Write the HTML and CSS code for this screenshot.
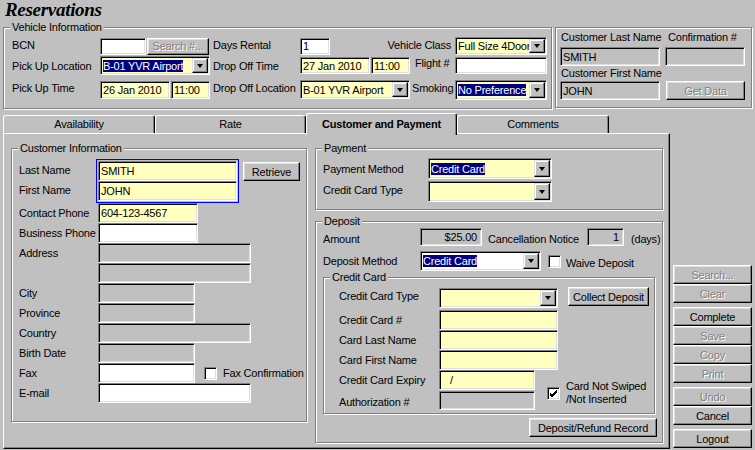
FILE: index.html
```html
<!DOCTYPE html>
<html>
<head>
<meta charset="utf-8">
<title>Reservations</title>
<link rel="stylesheet" href="styles.css">
</head>
<body>
<h1 class="title">Reservations</h1>

<div class="top">
  <div class="group vehicle">
    <div class="legend">Vehicle Information</div>
    <div class="vrow r1">
      <div class="lb w88">BCN</div>
      <div class="fld w46 h17"></div>
      <div class="btn dis w62 h17 ml1">Search #...</div>
      <div class="lb w91 pl4">Days Rental</div>
      <div class="fld w30 h17">1</div>
      <div class="lb w125 ra">Vehicle Class</div>
      <div class="fld sel y w92 h18"><span class="txt">Full Size 4Door</span><span class="arr"></span></div>
    </div>
    <div class="vrow r2">
      <div class="lb w88">Pick Up Location</div>
      <div class="fld sel y w110 h19"><span class="txt"><span class="hl">B-01 YVR Airport</span></span><span class="arr"></span></div>
      <div class="lb w90 pl3">Drop Off Time</div>
      <div class="fld y w70 h17">27 Jan 2010</div>
      <div class="fld y w39 h17 ml1">11:00</div>
      <div class="lb w45 pl5 flight">Flight #</div>
      <div class="fld w92 h17"></div>
    </div>
    <div class="vrow r3">
      <div class="lb w88">Pick Up Time</div>
      <div class="fld y w70 h18">26 Jan 2010</div>
      <div class="fld y w39 h18 ml1">11:00</div>
      <div class="lb w90 pl3">Drop Off Location</div>
      <div class="fld sel y w110 h19"><span class="txt">B-01 YVR Airport</span><span class="arr"></span></div>
      <div class="lb w45 pl2">Smoking</div>
      <div class="fld sel y w92 h20"><span class="txt"><span class="hl">No Preference</span></span><span class="arr"></span></div>
    </div>
  </div>

  <div class="group custtop">
    <div class="cgrid">
      <div class="clb pl1">Customer Last Name</div>
      <div class="clb pl3">Confirmation #</div>
      <div class="fld g h19 mt3">SMITH</div>
      <div class="fld g h19 mt3"></div>
      <div class="clb pl1">Customer First Name</div>
      <div></div>
      <div class="fld g h19 mt1">JOHN</div>
      <div class="btn dis h19 mt1 ml1">Get Data</div>
    </div>
  </div>
</div>

<div class="tabs">
  <div class="tab t152">Availability</div>
  <div class="tab t151">Rate</div>
  <div class="tab active t151">Customer and Payment</div>
  <div class="tab t152">Comments</div>
</div>

<div class="main">
  <div class="panel">
    <div class="group cust">
      <div class="legend">Customer Information</div>
      <div class="cbody">
        <div class="frow">
          <div class="flabels">
            <div class="flb">Last Name</div>
            <div class="flb">First Name</div>
          </div>
          <div class="focus">
            <div class="fld y w139 h20">SMITH</div>
            <div class="fld y w139 h20">JOHN</div>
          </div>
          <div class="btn retrieve">Retrieve</div>
        </div>
        <div class="crow"><div class="lb w79">Contact Phone</div><div class="fld y w100 h20">604-123-4567</div></div>
        <div class="crow"><div class="lb w79">Business Phone</div><div class="fld w100 h20"></div></div>
        <div class="crow"><div class="lb w79">Address</div><div class="fld g w153 h20"></div></div>
        <div class="crow"><div class="lb w79"></div><div class="fld g w153 h20"></div></div>
        <div class="crow"><div class="lb w79">City</div><div class="fld g w97 h20"></div></div>
        <div class="crow"><div class="lb w79">Province</div><div class="fld g w97 h20"></div></div>
        <div class="crow"><div class="lb w79">Country</div><div class="fld g w153 h20"></div></div>
        <div class="crow"><div class="lb w79">Birth Date</div><div class="fld g w97 h20"></div></div>
        <div class="crow"><div class="lb w79">Fax</div><div class="fld w97 h20"></div><div class="chk faxchk"></div><div class="lb faxlb">Fax Confirmation</div></div>
        <div class="crow"><div class="lb w79">E-mail</div><div class="fld w153 h20"></div></div>
      </div>
    </div>

    <div class="rcol">
      <div class="group pay">
        <div class="legend">Payment</div>
        <div class="pbody">
          <div class="prow"><div class="lb w105">Payment Method</div><div class="fld sel y w124 h21"><span class="txt"><span class="hl">Credit Card</span></span><span class="arr"></span></div></div>
          <div class="prow mt2"><div class="lb w105 up2">Credit Card Type</div><div class="fld sel y w124 h21"><span class="txt"></span><span class="arr"></span></div></div>
        </div>
      </div>

      <div class="group dep">
        <div class="legend">Deposit</div>
        <div class="dbody">
          <div class="drow h18r">
            <div class="lb w97 down2">Amount</div>
            <div class="fld g w62 h18 ra">$25.00</div>
            <div class="lb w105 pl6 down2">Cancellation Notice</div>
            <div class="fld g w37 h18 ra">1</div>
            <div class="lb pl7 down2">(days)</div>
          </div>
          <div class="drow h20r mt5">
            <div class="lb w97">Deposit Method</div>
            <div class="fld sel w121 h20"><span class="txt"><span class="hl">Credit Card</span></span><span class="arr"></span></div>
            <div class="chk waive"></div>
            <div class="lb ml5 down2">Waive Deposit</div>
          </div>

          <div class="group cc">
            <div class="legend">Credit Card</div>
            <div class="ccbody">
              <div class="ccrow">
                <div class="lb w100 up2">Credit Card Type</div>
                <div class="fld sel y w119 h20"><span class="txt"></span><span class="arr"></span></div>
                <div class="btn collect">Collect Deposit</div>
              </div>
              <div class="ccrow mt2"><div class="lb w100">Credit Card #</div><div class="fld y w119 h20"></div></div>
              <div class="ccrow"><div class="lb w100">Card Last Name</div><div class="fld y w119 h20"></div></div>
              <div class="ccrow"><div class="lb w100">Card First Name</div><div class="fld y w119 h20"></div></div>
              <div class="ccbottom">
                <div class="ccleft">
                  <div class="ccrow"><div class="lb w100">Credit Card Expiry</div><div class="fld y w96 h20 expiry">/</div></div>
                  <div class="ccrow"><div class="lb w100 auth">Authorization #</div><div class="fld g w96 h19"></div></div>
                </div>
                <div class="ccheck">
                  <div class="chk swiped"><svg width="9" height="9" viewBox="0 0 9 9"><path d="M1 4 L3 6 L8 1 M1 5 L3 7 L8 2 M1 6 L3 8 L8 3" stroke="#000" stroke-width="1" fill="none"/></svg></div>
                  <div class="swtxt">Card Not Swiped<br>/Not Inserted</div>
                </div>
              </div>
            </div>
          </div>

          <div class="btn refund">Deposit/Refund Record</div>
        </div>
      </div>
    </div>
  </div>

  <div class="side">
    <div class="btn dis sb">Search...</div>
    <div class="btn dis sb">Clear</div>
    <div class="btn sb gap">Complete</div>
    <div class="btn dis sb">Save</div>
    <div class="btn dis sb">Copy</div>
    <div class="btn dis sb">Print</div>
    <div class="btn dis sb gap">Undo</div>
    <div class="btn sb">Cancel</div>
    <div class="btn sb gap">Logout</div>
  </div>
</div>
</body>
</html>
```

FILE: styles.css
```css
* { box-sizing: border-box; }
html, body { margin: 0; padding: 0; }
body {
  background: #c0c0c0;
  font-family: "Liberation Sans", Arial, sans-serif;
  font-size: 11px;
  letter-spacing: -0.2px;
  color: #000;
  width: 755px;
  height: 450px;
  overflow: hidden;
  padding-left: 3px;
}
.title {
  height: 27px;
  margin: 0;
  padding-left: 2px;
  letter-spacing: -0.3px;
  font: italic bold 19px/20px "Liberation Serif", "Times New Roman", serif;
}

/* generic widgets */
.group {
  border: 1px solid #808080;
  box-shadow: inset 1px 1px #fff, 1px 1px #fff;
}
.legend {
  width: max-content;
  margin: -7px 0 0 6px;
  padding: 0 2px;
  line-height: 13px;
  height: 13px;
  background: #c0c0c0;
}
.fld {
  flex: none;
  display: flex;
  align-items: center;
  border: 1px solid;
  border-color: #808080 #fff #fff #808080;
  box-shadow: inset 1px 1px #000, inset -1px -1px #dfdfdf;
  background: #fff;
  padding: 0 2px 0 2px;
  white-space: nowrap;
  overflow: hidden;
}
.fld.ra { justify-content: flex-end; padding-right: 4px; }
.y { background: #ffffc0; }
.g { background: #c0c0c0; }
.sel { padding: 1px 1px 1px 2px; }
.sel .txt { flex: 1; overflow: hidden; white-space: nowrap; }
.hl { background: #000080; color: #fff; }
.arr {
  flex: none;
  width: 16px;
  height: 100%;
  background: #c0c0c0;
  border: 1px solid;
  border-color: #dfdfdf #000 #000 #dfdfdf;
  box-shadow: inset -1px -1px #808080, inset 1px 1px #fff;
  display: flex;
  align-items: center;
  justify-content: center;
}
.arr::after {
  content: "";
  width: 0;
  height: 0;
  border-left: 3.5px solid transparent;
  border-right: 3.5px solid transparent;
  border-top: 4px solid #000;
}
.btn {
  flex: none;
  display: flex;
  align-items: center;
  justify-content: center;
  background: #c0c0c0;
  border: 1px solid;
  border-color: #fff #000 #000 #fff;
  box-shadow: inset -1px -1px #808080, inset 1px 1px #dfdfdf;
  white-space: nowrap;
}
.dis { color: #808080; text-shadow: 1px 1px #fff; }
.chk {
  flex: none;
  width: 13px;
  height: 13px;
  background: #fff;
  border: 1px solid;
  border-color: #808080 #fff #fff #808080;
  box-shadow: inset 1px 1px #000, inset -1px -1px #dfdfdf;
  display: flex;
  align-items: center;
  justify-content: center;
}
.lb { flex: none; white-space: nowrap; }
.ra { text-align: right; }
.up2 { padding-bottom: 4px; }
.down2 { padding-top: 4px; }

/* sizes */
.w30 { width: 30px; } .w37 { width: 37px; } .w39 { width: 39px; } .w45 { width: 45px; }
.w46 { width: 46px; } .w62 { width: 62px; } .w70 { width: 70px; } .w79 { width: 79px; }
.w88 { width: 88px; } .w90 { width: 90px; } .w91 { width: 91px; } .w92 { width: 92px; }
.w96 { width: 96px; } .w97 { width: 97px; } .w100 { width: 100px; } .w105 { width: 105px; }
.w110 { width: 110px; } .w119 { width: 119px; } .w121 { width: 121px; } .w124 { width: 124px; }
.w125 { width: 125px; } .w139 { width: 139px; } .w153 { width: 153px; }
.h17 { height: 17px; } .h18 { height: 18px; } .h19 { height: 19px; } .h20 { height: 20px; } .h21 { height: 21px; }
.pl1 { padding-left: 1px; } .pl2 { padding-left: 2px; } .pl3 { padding-left: 3px; } .pl4 { padding-left: 4px; }
.pl5 { padding-left: 5px; } .pl6 { padding-left: 6px; } .pl7 { padding-left: 7px; }
.ml1 { margin-left: 1px; } .ml5 { margin-left: 5px; }
.mt1 { margin-top: 1px; } .mt2 { margin-top: 2px; } .mt3 { margin-top: 3px; } .mt5 { margin-top: 5px; }
.lb.w125.ra { padding-right: 4px; }

/* top area */
.top { display: flex; align-items: flex-start; height: 86px; }
.vehicle { width: 549px; height: 82px; }
.vrow { display: flex; align-items: center; padding-left: 8px; }
.vrow.r1 { height: 20px; margin-top: 2px; }
.vrow.r1 .lb { padding-bottom: 3px; }
.vrow.r2 { height: 19px; }
.vrow.r2 .flight { padding-bottom: 5px; }
.vrow.r3 { height: 21px; margin-top: 4px; }
.vrow.r3 .lb { padding-bottom: 4px; }
.custtop { width: 197px; height: 81px; margin-left: 3px; }
.cgrid {
  display: grid;
  grid-template-columns: 100px 80px;
  column-gap: 5px;
  padding: 2px 0 0 4px;
}
.clb { height: 14px; line-height: 14px; white-space: nowrap; }

/* tabs */
.tabs {
  display: flex;
  align-items: flex-end;
  height: 20px;
  position: relative;
  z-index: 1;
}
.tab {
  flex: none;
  height: 18px;
  line-height: 17px;
  text-align: center;
  background: #c0c0c0;
  border: 1px solid;
  border-color: #fff #000 transparent #fff;
  border-bottom: 0;
  border-radius: 3px 3px 0 0;
  box-shadow: inset -1px 0 #808080;
}
.t151 { width: 151px; }
.t152 { width: 152px; }
.tab.active {
  height: 22px;
  margin-bottom: -2px;
  line-height: 20px;
  font-weight: bold;
}

/* main */
.main { display: flex; align-items: flex-start; }
.panel {
  width: 667px;
  height: 316px;
  display: flex;
  align-items: flex-start;
  padding: 14px 0 0 7px;
  border: 1px solid;
  border-color: #fff #000 #000 #fff;
  box-shadow: inset -1px -1px #808080;
}
.cust { width: 296px; height: 274px; flex: none; }
.cbody { padding: 4px 0 0 7px; }
.frow { display: flex; align-items: flex-start; }
.flabels { width: 77px; padding-top: 1px; }
.flb { height: 20px; line-height: 20px; }
.focus { border: 1px solid #0000ff; padding: 1px; }
.retrieve { margin: 3px 0 0 4px; width: 57px; height: 19px; }
.crow { display: flex; align-items: center; height: 20px; }
.crow .lb { padding-bottom: 1px; }
.faxchk { margin-left: 9px; }
.crow .faxlb { margin-left: 6px; padding-bottom: 0; }

.rcol { margin-left: 8px; width: 348px; display: flex; flex-direction: column; }
.pay { height: 62px; }
.pbody { padding: 3px 0 0 7px; }
.prow { display: flex; align-items: center; height: 21px; }
.dep { height: 222px; margin-top: 11px; }
.dbody { padding: 0 0 0 7px; display: flex; flex-direction: column; }
.drow { display: flex; align-items: center; }
.h18r { height: 18px; }
.h20r { height: 20px; }
.waive { margin-left: 7px; }
.cc { width: 332px; height: 137px; margin-top: 6px; }
.ccbody { padding: 4px 0 0 15px; }
.ccrow { display: flex; align-items: center; height: 20px; }
.collect { margin: -1px 0 0 10px; width: 81px; height: 19px; align-self: flex-start; }
.ccbottom { display: flex; align-items: flex-start; }
.expiry { padding-left: 10px; }
.auth { padding-top: 4px; }
.ccheck { display: flex; align-items: flex-start; margin: 10px 0 0 12px; }
.swiped { margin-top: 7px; }
.swtxt { margin-left: 6px; line-height: 13px; white-space: nowrap; }
.refund { align-self: flex-end; margin: 4px 5px 0 0; width: 128px; height: 19px; }

.side {
  width: 79px;
  margin-left: 3px;
  padding-top: 132px;
  display: flex;
  flex-direction: column;
}
.sb { height: 19px; }
.sb.gap { margin-top: 4px; }
```
